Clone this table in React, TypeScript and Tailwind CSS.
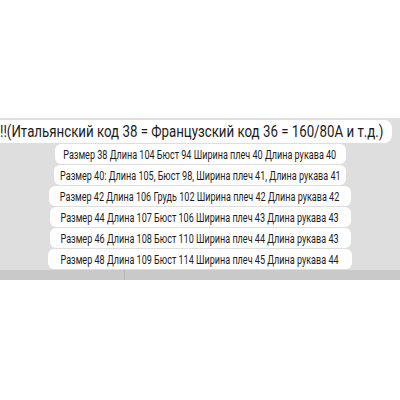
export default function App() {
  const rows = [
    { text: 'Размер 38 Длина 104 Бюст 94 Ширина плеч 40 Длина рукава 40', w: 291 },
    { text: 'Размер 40: Длина 105, Бюст 98, Ширина плеч 41, Длина рукава 41', w: 292 },
    { text: 'Размер 42 Длина 106 Грудь 102 Ширина плеч 42 Длина рукава 42', w: 302 },
    { text: 'Размер 44 Длина 107 Бюст 106 Ширина плеч 43 Длина рукава 43', w: 301 },
    { text: 'Размер 46 Длина 108 Бюст 110 Ширина плеч 44 Длина рукава 43', w: 301 },
    { text: 'Размер 48 Длина 109 Бюст 114 Ширина плеч 45 Длина рукава 44', w: 304 },
  ];

  return (
    <div className="w-[400px] h-[400px] bg-white overflow-hidden flex flex-col">
      <div className="h-[118px]" />
      {/* chat-like gray band */}
      <div className="bg-[#dedede] flex flex-col pt-[2px]">
        <div className="w-[392px] h-[23px] bg-white rounded-r-lg flex items-center overflow-hidden">
          <span
            className="text-[16px] text-[#1c1c1c] whitespace-nowrap scale-x-[0.83] origin-left"
            style={{ fontFamily: 'Roboto, "Noto Sans", sans-serif' }}
          >
            !!(Итальянский код 38 = Французский код 36 = 160/80A и т.д.)
          </span>
        </div>
        <div className="flex flex-col items-center gap-[1px] pt-[1px] pb-[1px]">
          {rows.map((r) => (
            <div
              key={r.text}
              className="h-[20px] bg-white rounded-md flex items-center justify-center"
              style={{ width: r.w }}
            >
              <span
                className="shrink-0 text-[13.5px] text-[#1c1c1c] whitespace-nowrap scale-x-[0.67]"
                style={{ fontFamily: 'Roboto, "Noto Sans", sans-serif' }}
              >
                {r.text}
              </span>
            </div>
          ))}
        </div>
        <div className="h-[10px] bg-[#c9c9c9] flex">
          <div className="w-[125px] border-r border-[#b5b5b5]" />
        </div>
      </div>
    </div>
  );
}
